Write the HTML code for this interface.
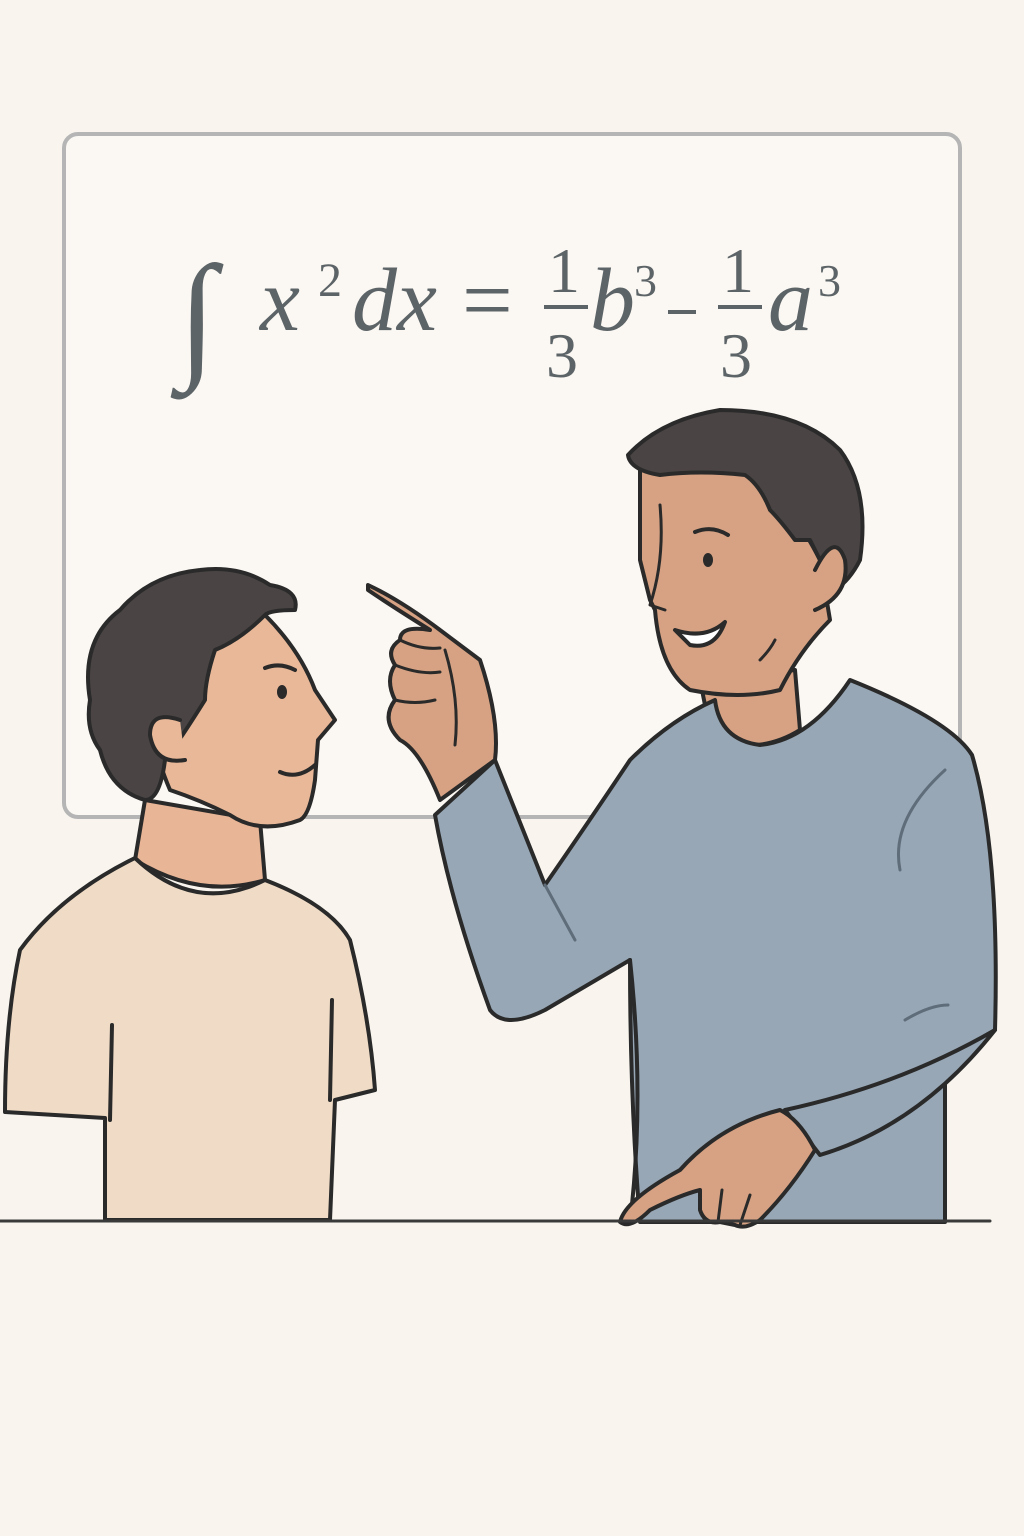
<!DOCTYPE html>
<html><head><meta charset="utf-8"><style>
html,body{margin:0;padding:0;background:#f9f5ee;}
svg{display:block}
</style></head><body>
<svg width="1024" height="1536" viewBox="0 0 1024 1536" xmlns="http://www.w3.org/2000/svg">
<rect width="1024" height="1536" fill="#f9f5ee"/>
<rect x="64" y="134" width="896" height="683" rx="14" fill="#fbf8f3" stroke="#b5b5b5" stroke-width="4"/>
<g fill="#5d6467" font-family="'Liberation Serif',serif" font-style="italic">
<text x="178" y="362" font-size="140" font-style="normal">∫</text>
<text x="260" y="330" font-size="90">x</text>
<text x="318" y="296" font-size="48" font-style="normal">2</text>
<text x="352" y="330" font-size="90">dx</text>
<text x="462" y="330" font-size="90" font-style="normal">=</text>
<text x="548" y="292" font-size="64" font-style="normal">1</text>
<rect x="544" y="305" width="44" height="4"/>
<text x="546" y="377" font-size="64" font-style="normal">3</text>
<text x="590" y="330" font-size="90">b</text>
<text x="634" y="296" font-size="46" font-style="normal">3</text>
<rect x="668" y="310" width="28" height="4"/>
<text x="722" y="292" font-size="64" font-style="normal">1</text>
<rect x="718" y="305" width="44" height="4"/>
<text x="720" y="377" font-size="64" font-style="normal">3</text>
<text x="768" y="330" font-size="90">a</text>
<text x="818" y="296" font-size="46" font-style="normal">3</text>
</g>
<g stroke="#2a2a2a" stroke-width="4" stroke-linejoin="round" stroke-linecap="round">
<!-- student -->
<path d="M145 800 L135 860 Q200 900 265 880 L260 820 Z" fill="#e8b596"/>
<path d="M20 950 Q60 895 135 858 Q195 915 265 880 Q330 905 350 940 Q370 1020 375 1090 L335 1100 L330 1220 L105 1220 L105 1118 L5 1112 Q5 1020 20 950 Z" fill="#f0dcc6"/>
<path d="M155 660 Q200 600 265 615 Q300 650 315 690 L335 720 L318 740 L315 780 Q310 815 300 820 Q260 835 230 815 Q200 800 170 790 Q140 720 155 660 Z" fill="#e9b898"/>
<path d="M90 700 Q80 640 120 610 Q150 575 200 570 Q240 565 270 585 Q300 590 295 610 Q270 610 265 615 Q240 640 215 650 Q205 680 205 700 Q180 740 165 760 Q160 800 145 800 Q110 790 100 750 Q85 730 90 700 Z" fill="#4a4444"/>
<path d="M180 720 Q150 710 150 735 Q155 765 185 760" fill="#e9b898"/>
<ellipse cx="282" cy="692" rx="5" ry="7" fill="#2a2a2a" stroke="none"/>
<path d="M265 668 Q280 662 295 670" fill="none"/>
<path d="M280 772 Q298 780 315 765" fill="none"/>
<path d="M110 1120 L112 1025 M330 1100 L332 1000" fill="none"/>
<!-- teacher body -->
<path d="M700 680 L712 740 Q760 755 800 730 L795 670 Z" fill="#d6a283"/>
<path d="M715 700 Q720 740 760 745 Q810 740 850 680 Q950 720 972 755 Q1000 850 995 1030 L945 1080 L945 1222 L640 1222 Q630 1100 630 960 L545 1010 Q505 1030 490 1010 Q450 900 435 815 L495 760 L545 885 Q590 820 630 760 Q670 720 715 700 Z" fill="#97a7b5"/>
<path d="M995 1030 Q900 1085 785 1110 L820 1155 Q920 1125 995 1030 Z" fill="#97a7b5"/>
<path d="M630 1222 Q645 1100 630 960" fill="none"/>
<path d="M905 1020 Q930 1005 948 1005" fill="none" stroke="#5f6d7a" stroke-width="3"/>
<path d="M900 870 Q890 820 945 770 M545 885 L575 940" fill="none" stroke="#5f6d7a" stroke-width="3"/>
<!-- raised hand -->
<path d="M368 585 Q400 600 440 630 L480 660 Q500 720 495 760 L440 800 Q420 750 400 740 Q380 720 395 700 Q385 680 395 665 Q385 650 400 640 Q400 625 430 630 Q390 605 368 590 Z" fill="#d6a283"/>
<path d="M400 640 Q420 650 440 648 M395 665 Q420 675 440 672 M395 700 Q415 705 435 700 M445 650 Q460 700 455 745" fill="none" stroke-width="3"/>
<!-- bottom hand -->
<path d="M780 1110 Q800 1120 815 1150 Q790 1190 760 1220 Q745 1230 735 1225 L720 1222 Q705 1225 700 1210 L700 1190 Q680 1195 650 1210 Q630 1230 620 1222 Q625 1200 680 1170 Q720 1125 780 1110 Z" fill="#d6a283"/>
<path d="M718 1222 L722 1190 M740 1225 L750 1195" fill="none" stroke-width="3"/>
<!-- teacher head -->
<path d="M640 470 Q700 440 760 470 Q800 520 820 560 L830 620 Q800 650 780 690 Q740 700 690 690 Q660 670 655 610 L650 600 L640 560 Z" fill="#d6a283"/>
<path d="M628 455 Q660 420 720 410 Q800 410 840 450 Q870 490 860 560 Q850 580 835 590 Q820 560 810 540 L795 540 Q780 520 770 510 Q760 485 745 475 Q700 470 660 475 Q630 470 628 455 Z" fill="#4a4444"/>
<path d="M815 570 Q835 530 845 560 Q850 595 815 610" fill="#d6a283"/>
<ellipse cx="708" cy="560" rx="5" ry="7" fill="#2a2a2a" stroke="none"/>
<path d="M695 532 Q712 525 728 535" fill="none"/>
<path d="M675 630 Q705 640 725 622 Q715 650 690 645 Z" fill="#fff"/>
<path d="M760 660 Q770 650 775 640" fill="none" stroke-width="3"/>
<path d="M660 505 Q665 560 650 605 L665 610" fill="none" stroke-width="3"/>
<!-- floor -->
<path d="M0 1221 L990 1221" stroke="#3a3a3a" stroke-width="3"/>
</g>
</svg>
</body></html>
